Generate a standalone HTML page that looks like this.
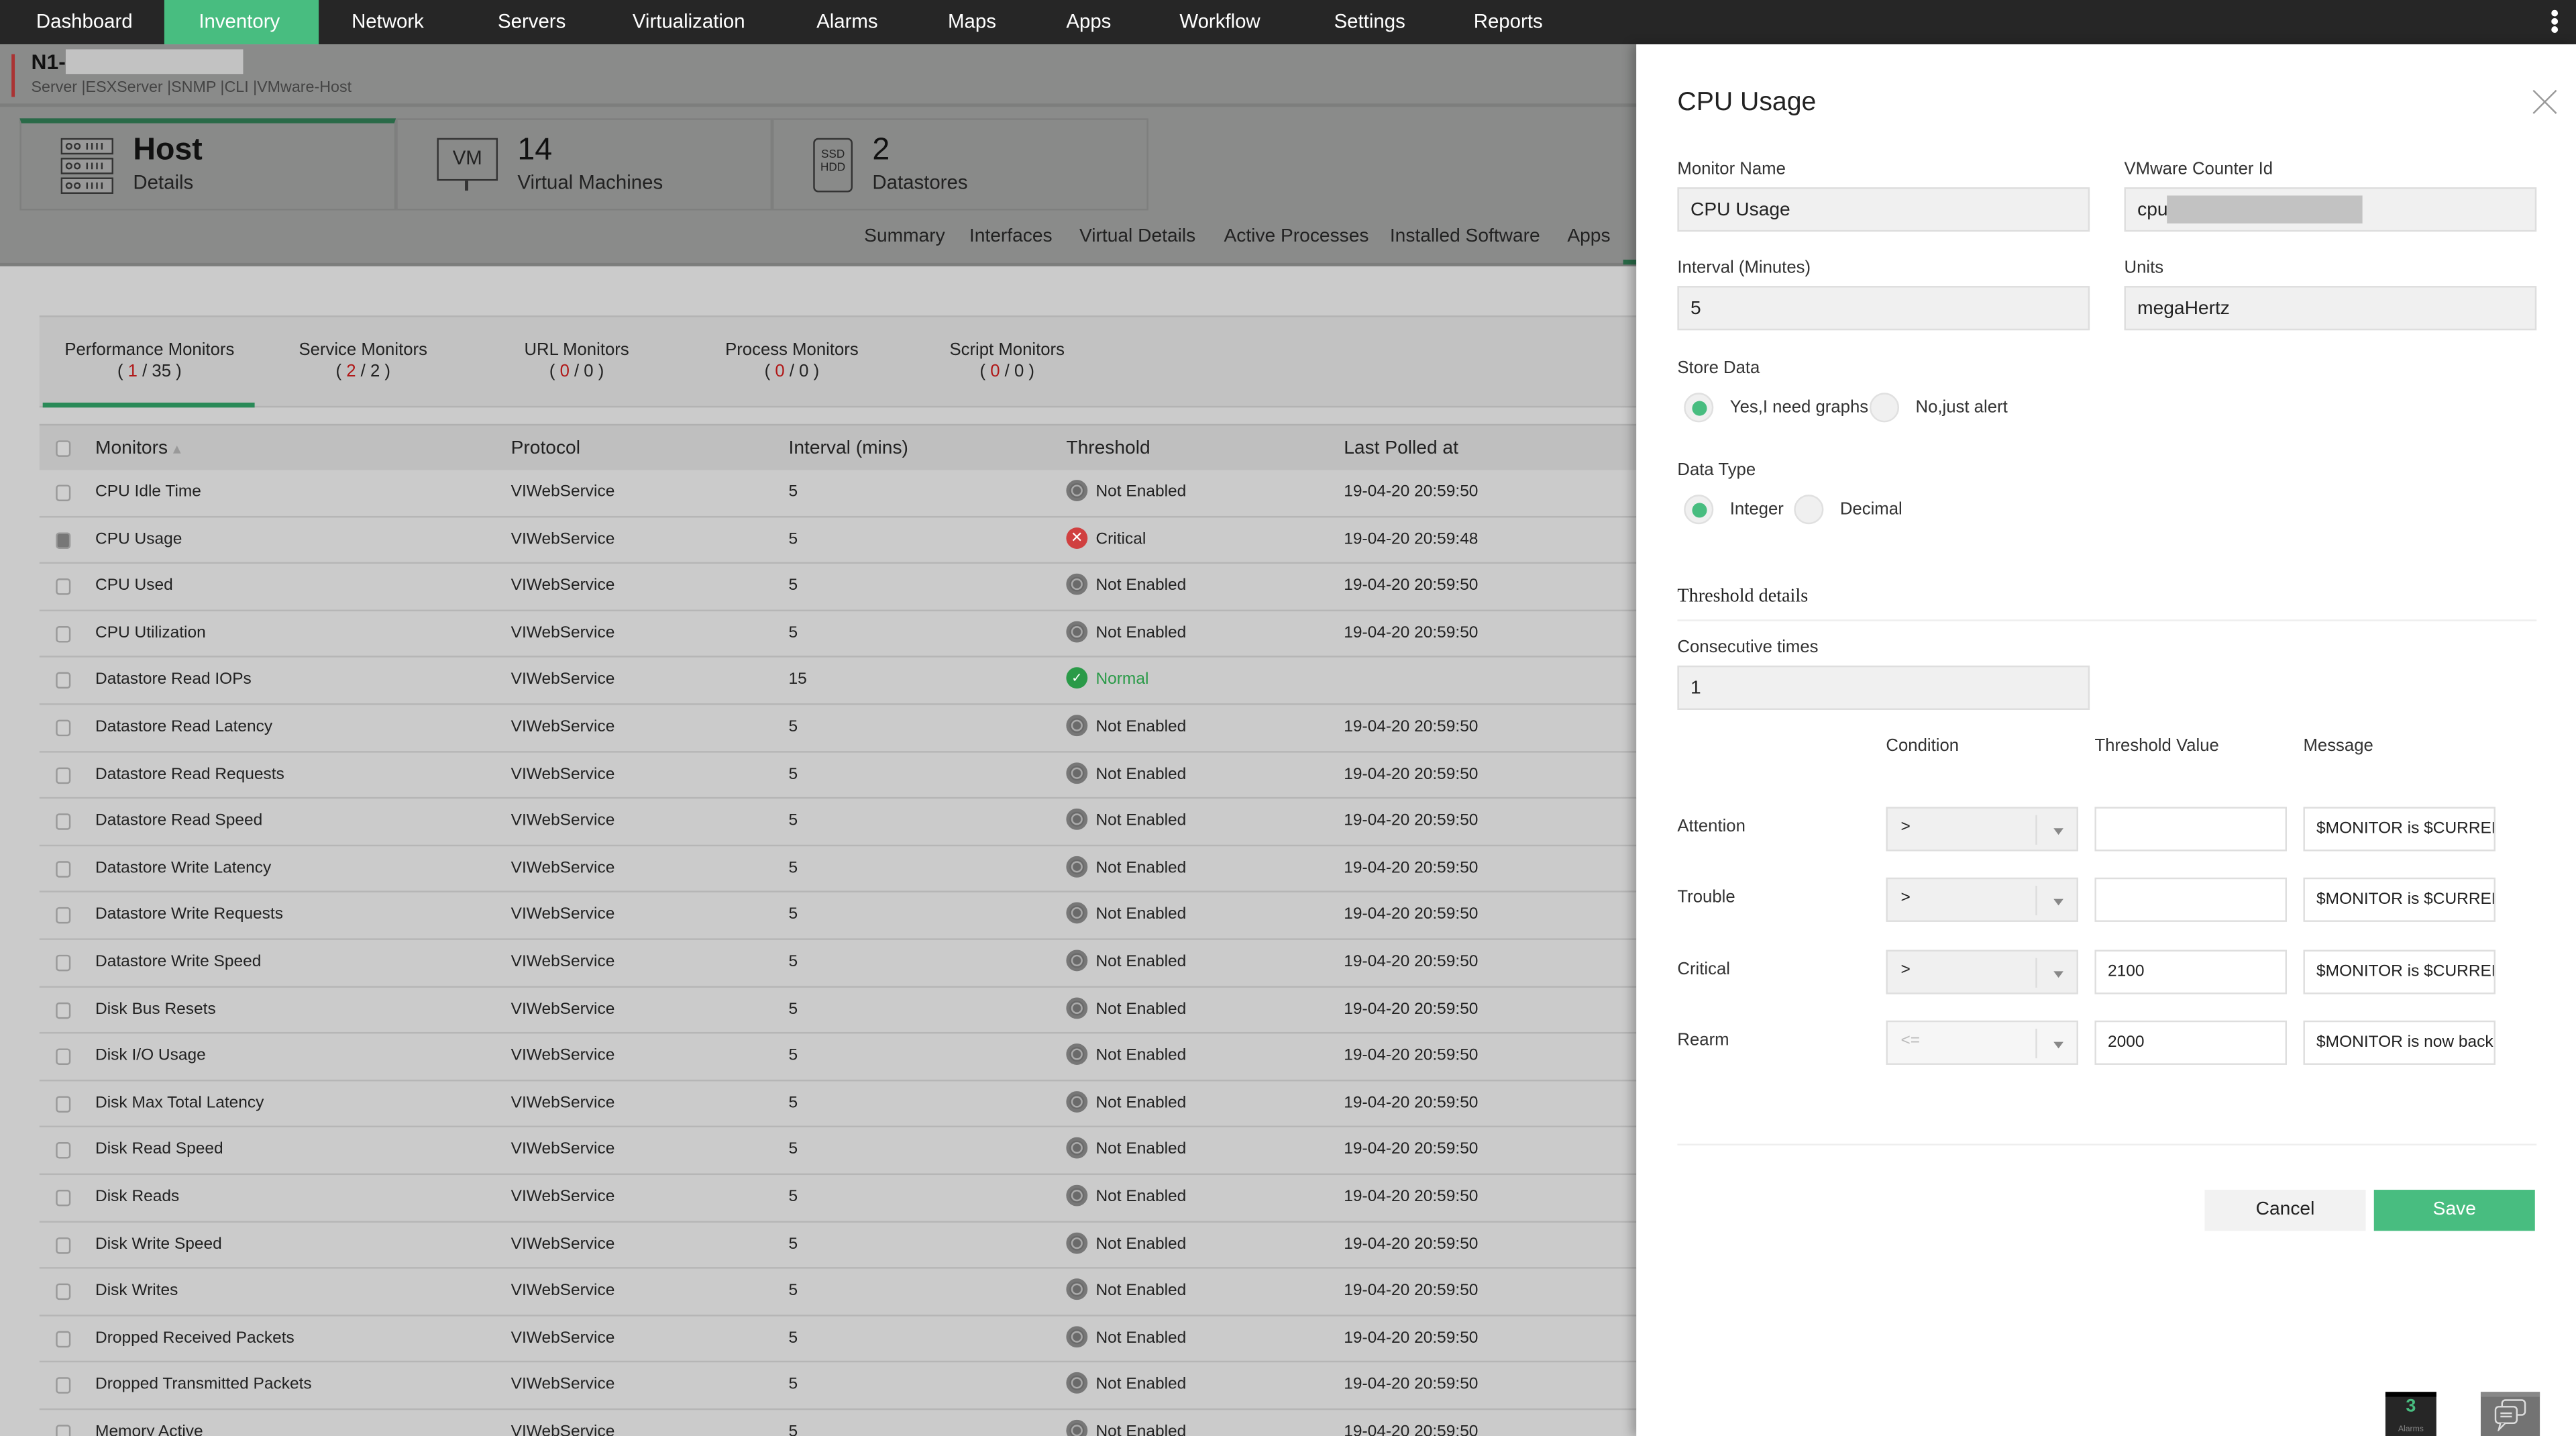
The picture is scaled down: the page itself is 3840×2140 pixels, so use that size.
<!DOCTYPE html>
<html><head><meta charset="utf-8"><style>
*{box-sizing:border-box;margin:0;padding:0}
html,body{width:3840px;height:2139px;overflow:hidden;background:#ccc}
#w{position:absolute;left:0;top:0;width:1568px;height:874px;transform:scale(2.44898);transform-origin:0 0;font-family:"Liberation Sans",sans-serif;color:#222;overflow:hidden;background:#cbcbcb}
.a{position:absolute;white-space:nowrap}
.nav{left:0;top:0;width:1568px;height:27px;background:#262626}
.nav span{position:absolute;top:6px;color:#fff;font-size:12px}
.hd{left:0;top:27px;width:996px;height:135px;background:#8a8b8a;border-bottom:2px solid #7c7d7c}
.card{top:72px;height:56px;border:1px solid #7e7f7e;background:#898a89}
.sub span{position:absolute;top:138px;font-size:11.5px;color:#222}
.mt{left:24px;top:192px;width:972px;height:56px;background:#c2c2c2;border-top:1px solid #b3b3b3;border-bottom:1px solid #b3b3b3}
.mt div{position:absolute;top:14px;width:130px;text-align:center;font-size:10.5px;line-height:13px}
.r{color:#b01818}
.th{left:24px;top:258px;width:972px;height:28px;background:#bfbfbf;border-top:1px solid #b0b0b0;font-size:11.5px}
.row{left:24px;width:972px;height:28.6px;border-bottom:1px solid #b6b6b6;font-size:10px}
.row span,.th span{position:absolute;top:8px}
.cb{position:absolute;left:10px;top:9px;width:9px;height:10px;border:1px solid #999;border-radius:2px;background:#cfcfcf}
.ic{position:absolute;left:625px;top:6px;width:13px;height:13px;border-radius:50%}
.pn{left:996px;top:27px;width:572px;height:847px;background:#fff;box-shadow:-3px 0 6px rgba(0,0,0,.25)}
.lb{font-size:10.5px;color:#333}
.in{background:#f0f0f0;border:1px solid #dedede;height:27px;font-size:11.5px;padding:7px 0 0 7px;color:#222}
.rad{width:18px;height:18px;border-radius:50%;background:#f0f0f0;border:1px solid #e0e0e0}
.rad.on::after{content:"";position:absolute;left:4px;top:4px;width:9px;height:9px;border-radius:50%;background:#48bd80}
.sel{width:117px;height:27px;background:#f0f0f0;border:1px solid #dedede;font-size:10px;padding:6px 0 0 8px}
.sel::after{content:"";position:absolute;right:0;top:4px;width:24px;height:18px;border-left:1px solid #ddd}
.sel b{position:absolute;right:8px;top:12px;border:3px solid transparent;border-top:4px solid #888}
.ms{width:117px;height:27px;background:#fff;border:1px solid #dedede;font-size:10px;padding:7px 0 0 7px;overflow:hidden}
</style></head><body><div id="w">
<div class="a nav">
<span style="left:22px">Dashboard</span>
<div class="a" style="left:100px;top:0;width:94px;height:27px;background:#48bd80"></div>
<span style="left:121px">Inventory</span>
<span style="left:214px">Network</span><span style="left:303px">Servers</span><span style="left:385px">Virtualization</span><span style="left:497px">Alarms</span><span style="left:577px">Maps</span><span style="left:649px">Apps</span><span style="left:718px">Workflow</span><span style="left:812px">Settings</span><span style="left:897px">Reports</span>
<div class="a" style="left:1553px;top:6px;width:4px;height:4px;border-radius:50%;background:#fff;box-shadow:0 5px 0 #fff,0 10px 0 #fff"></div>
</div>
<div class="a hd"></div>
<div class="a" style="left:7px;top:33px;width:2px;height:26px;background:#a33"></div>
<div class="a" style="left:19px;top:30px;font-size:13px;font-weight:bold;color:#111">N1-</div>
<div class="a" style="left:40px;top:30px;width:108px;height:15px;background:#c2c2c2"></div>
<div class="a" style="left:19px;top:48px;font-size:9.5px;color:#444">Server |ESXServer |SNMP |CLI |VMware-Host</div>
<div class="a" style="left:0;top:63px;width:996px;height:2px;background:#7d7e7d"></div>
<div class="a card" style="left:12px;width:229px;border-top:3px solid #2a6a48"></div>
<div class="a card" style="left:241px;width:229px"></div>
<div class="a card" style="left:470px;width:229px"></div>
<svg class="a" style="left:37px;top:84px" width="32" height="34"><g fill="#999" stroke="#333"><rect x="0.5" y="0.5" width="31" height="9"/><rect x="0.5" y="12.5" width="31" height="9"/><rect x="0.5" y="24.5" width="31" height="9"/></g><g fill="none" stroke="#333"><circle cx="5" cy="5" r="1.6"/><circle cx="10" cy="5" r="1.6"/><circle cx="5" cy="17" r="1.6"/><circle cx="10" cy="17" r="1.6"/><circle cx="5" cy="29" r="1.6"/><circle cx="10" cy="29" r="1.6"/><path d="M16 3v4M19 3v4M22 3v4M25 3v4M16 15v4M19 15v4M22 15v4M25 15v4M16 27v4M19 27v4M22 27v4M25 27v4"/></g></svg>
<div class="a" style="left:81px;top:81px;font-size:19px;color:#111;font-weight:bold">Host</div>
<div class="a" style="left:81px;top:104px;font-size:12px;color:#222">Details</div>
<div class="a" style="left:266px;top:84px;width:37px;height:26px;border:1px solid #333;font-size:12px;text-align:center;padding-top:4px;color:#222">VM</div>
<div class="a" style="left:283px;top:110px;width:2px;height:6px;background:#333"></div>
<div class="a" style="left:315px;top:81px;font-size:19px;color:#111">14</div>
<div class="a" style="left:315px;top:104px;font-size:12px">Virtual Machines</div>
<div class="a" style="left:495px;top:84px;width:24px;height:33px;border:1px solid #333;border-radius:3px;font-size:7px;text-align:center;padding-top:6px;line-height:8px">SSD<br>HDD</div>
<div class="a" style="left:531px;top:81px;font-size:19px;color:#111">2</div>
<div class="a" style="left:531px;top:104px;font-size:12px">Datastores</div>
<div class="sub"><span style="left:526px">Summary</span><span style="left:590px">Interfaces</span><span style="left:657px">Virtual Details</span><span style="left:745px">Active Processes</span><span style="left:846px">Installed Software</span><span style="left:954px">Apps</span></div>
<div class="a" style="left:988px;top:158px;width:8px;height:3px;background:#2a6a48"></div>
<div class="a mt">
<div style="left:2px">Performance Monitors<br>( <span class="r">1</span> / 35 )</div>
<div style="left:132px">Service Monitors<br>( <span class="r">2</span> / 2 )</div>
<div style="left:262px">URL Monitors<br>( <span class="r">0</span> / 0 )</div>
<div style="left:393px">Process Monitors<br>( <span class="r">0</span> / 0 )</div>
<div style="left:524px">Script Monitors<br>( <span class="r">0</span> / 0 )</div>
<div style="left:2px;top:52px;width:129px;height:3px;background:#2a8a58"></div>
</div>
<div class="a th"><div class="cb"></div><span style="left:34px">Monitors <small style="color:#999">▴</small></span><span style="left:287px">Protocol</span><span style="left:456px">Interval (mins)</span><span style="left:625px">Threshold</span><span style="left:794px">Last Polled at</span></div>
<div id="rows"></div>
<div class="a pn">
<div class="a" style="left:25px;top:27px;font-size:16px;color:#222">CPU Usage</div>
<svg class="a" style="left:545px;top:27px" width="16" height="16"><path d="M1 1L15 15M15 1L1 15" stroke="#999" stroke-width="1"/></svg>
<div class="a lb" style="left:25px;top:70px">Monitor Name</div>
<div class="a lb" style="left:297px;top:70px">VMware Counter Id</div>
<div class="a in" style="left:25px;top:87px;width:251px">CPU Usage</div>
<div class="a in" style="left:297px;top:87px;width:251px">cpu.</div>
<div class="a" style="left:323px;top:92px;width:119px;height:17px;background:#c2c2c2"></div>
<div class="a lb" style="left:25px;top:130px">Interval (Minutes)</div>
<div class="a lb" style="left:297px;top:130px">Units</div>
<div class="a in" style="left:25px;top:147px;width:251px">5</div>
<div class="a in" style="left:297px;top:147px;width:251px">megaHertz</div>
<div class="a lb" style="left:25px;top:191px">Store Data</div>
<div class="a rad on" style="left:29px;top:212px"></div>
<div class="a lb" style="left:57px;top:215px">Yes,I need graphs</div>
<div class="a rad" style="left:142px;top:212px"></div>
<div class="a lb" style="left:170px;top:215px">No,just alert</div>
<div class="a lb" style="left:25px;top:253px">Data Type</div>
<div class="a rad on" style="left:29px;top:274px"></div>
<div class="a lb" style="left:57px;top:277px">Integer</div>
<div class="a rad" style="left:96px;top:274px"></div>
<div class="a lb" style="left:124px;top:277px">Decimal</div>
<div class="a" style="left:25px;top:330px;font-size:11.5px;font-family:'Liberation Serif',serif;color:#222">Threshold details</div>
<div class="a" style="left:25px;top:350px;width:523px;height:1px;background:#eee"></div>
<div class="a lb" style="left:25px;top:361px">Consecutive times</div>
<div class="a in" style="left:25px;top:378px;width:251px">1</div>
<div class="a lb" style="left:152px;top:421px">Condition</div>
<div class="a lb" style="left:279px;top:421px">Threshold Value</div>
<div class="a lb" style="left:406px;top:421px">Message</div>
<div class="a lb" style="left:25px;top:470px">Attention</div>
<div class="a sel" style="left:152px;top:464px">&gt;<b></b></div><div class="a ms" style="left:279px;top:464px"></div><div class="a ms" style="left:406px;top:464px">$MONITOR is $CURRENT</div>
<div class="a lb" style="left:25px;top:513px">Trouble</div>
<div class="a sel" style="left:152px;top:507px">&gt;<b></b></div><div class="a ms" style="left:279px;top:507px"></div><div class="a ms" style="left:406px;top:507px">$MONITOR is $CURRENT</div>
<div class="a lb" style="left:25px;top:557px">Critical</div>
<div class="a sel" style="left:152px;top:551px">&gt;<b></b></div><div class="a ms" style="left:279px;top:551px">2100</div><div class="a ms" style="left:406px;top:551px">$MONITOR is $CURRENT</div>
<div class="a lb" style="left:25px;top:600px">Rearm</div>
<div class="a sel" style="left:152px;top:594px;color:#bbb;background:#f6f6f6">&lt;=<b></b></div><div class="a ms" style="left:279px;top:594px">2000</div><div class="a ms" style="left:406px;top:594px">$MONITOR is now back</div>
<div class="a" style="left:25px;top:669px;width:523px;height:1px;background:#eee"></div>
<div class="a" style="left:346px;top:697px;width:98px;height:25px;background:#f2f2f2;font-size:11.5px;text-align:center;padding-top:6px">Cancel</div>
<div class="a" style="left:449px;top:697px;width:98px;height:25px;background:#48bd80;color:#fff;font-size:11.5px;text-align:center;padding-top:6px">Save</div>
<div class="a" style="left:456px;top:820px;width:31px;height:27px;background:#262626;border-top:3px solid #000;text-align:center;color:#48bd80;font-size:11px;font-weight:bold;line-height:12px">3<br><span style="font-size:5px;color:#888;font-weight:normal">Alarms</span></div>
<div class="a" style="left:514px;top:820px;width:36px;height:27px;background:#737373;border-top:3px solid #888"></div>
<svg class="a" style="left:521px;top:824px" width="22" height="20"><rect x="6" y="1" width="14" height="9" rx="2" fill="none" stroke="#ddd"/><rect x="2" y="5" width="13" height="10" rx="2" fill="#737373" stroke="#ddd"/><path d="M5 9h7M5 11h7" stroke="#ddd"/><path d="M5 15l-1 4 4-4" fill="#737373" stroke="#ddd"/></svg>
</div>
</div>
<script>
var d=[["CPU Idle Time",5,0,"19-04-20 20:59:50"],["CPU Usage",5,1,"19-04-20 20:59:48"],["CPU Used",5,0,"19-04-20 20:59:50"],["CPU Utilization",5,0,"19-04-20 20:59:50"],["Datastore Read IOPs",15,2,""],["Datastore Read Latency",5,0],["Datastore Read Requests",5,0],["Datastore Read Speed",5,0],["Datastore Write Latency",5,0],["Datastore Write Requests",5,0],["Datastore Write Speed",5,0],["Disk Bus Resets",5,0],["Disk I/O Usage",5,0],["Disk Max Total Latency",5,0],["Disk Read Speed",5,0],["Disk Reads",5,0],["Disk Write Speed",5,0],["Disk Writes",5,0],["Dropped Received Packets",5,0],["Dropped Transmitted Packets",5,0],["Memory Active",5,0]];
var h="";d.forEach(function(r,i){var t=286+i*28.6;var st=r[2]==1?'<div class="ic" style="background:#d04040;color:#fff;font-size:9px;text-align:center;line-height:13px">✕</div><span style="left:643px">Critical</span>':r[2]==2?'<div class="ic" style="background:#2a9a48;color:#fff;font-size:8px;text-align:center;line-height:13px">✓</div><span style="left:643px;color:#2a9a48">Normal</span>':'<div class="ic" style="background:#6a6a6a;border:2px solid #777"><div style="position:absolute;left:1px;top:1px;width:7px;height:7px;border-radius:50%;border:1px solid #aaa"></div></div><span style="left:643px">Not Enabled</span>';
var lp=r[3]===undefined?"19-04-20 20:59:50":r[3];
h+='<div class="a row" style="top:'+t+'px"><div class="cb"'+(r[2]==1?' style="background:#777"':'')+'></div><span style="left:34px">'+r[0]+'</span><span style="left:287px">VIWebService</span><span style="left:456px">'+r[1]+'</span>'+st+'<span style="left:794px">'+lp+'</span></div>';});
document.getElementById("rows").innerHTML=h;
</script>
</body></html>
